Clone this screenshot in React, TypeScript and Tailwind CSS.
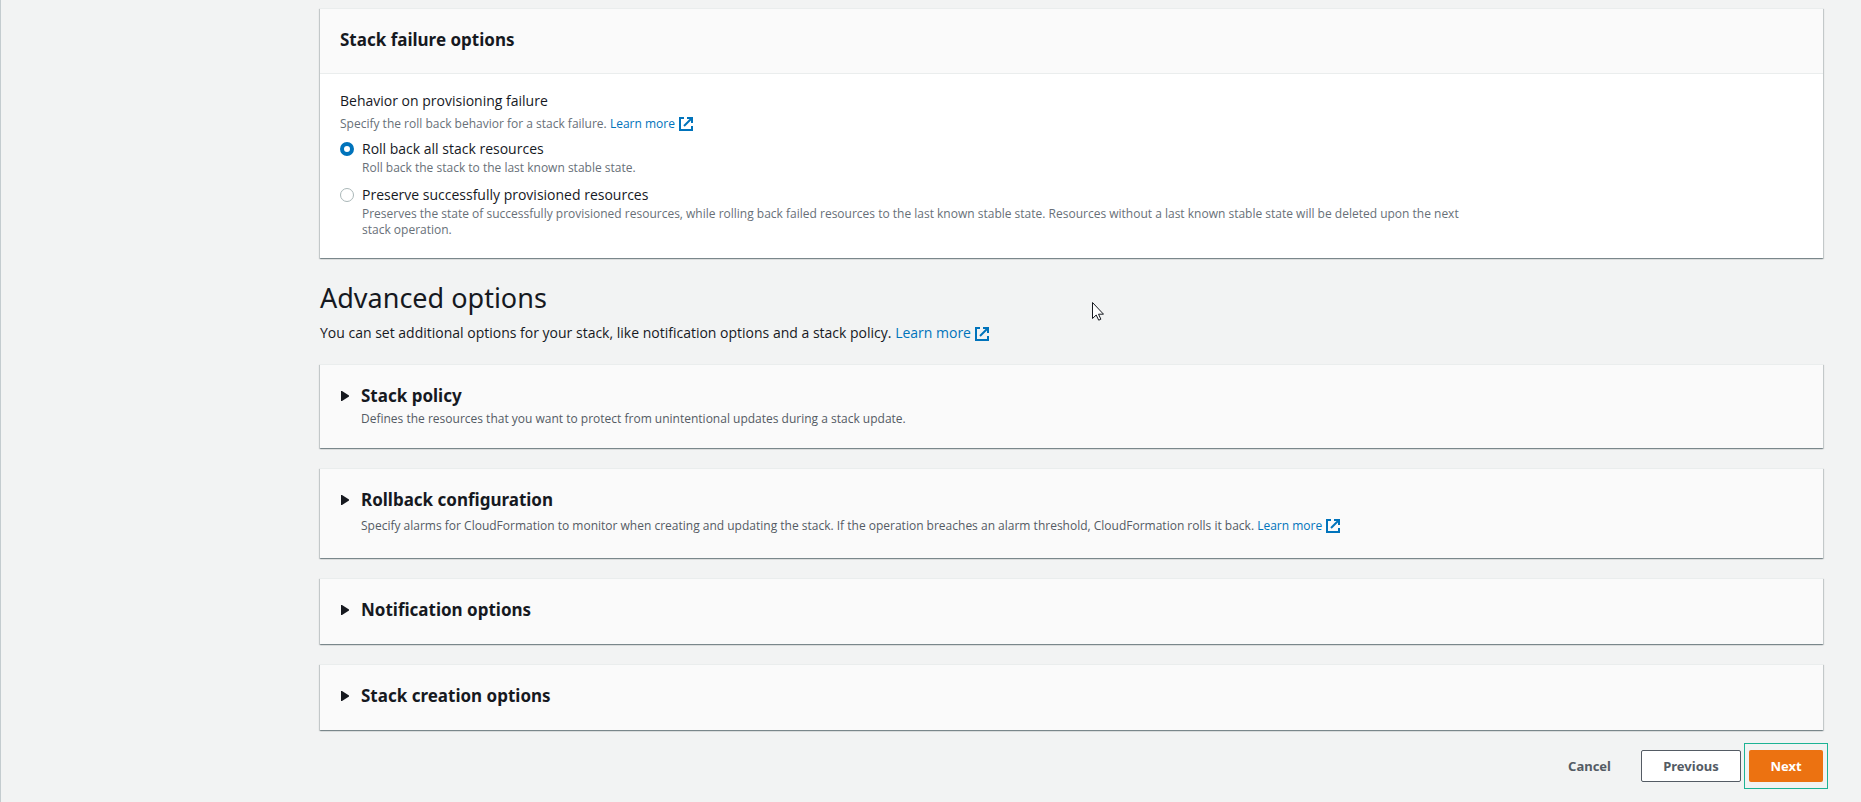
import { useState, type ReactNode } from "react";

const CARD =
  "border-t border-[#eaeded] shadow-[0_1px_1px_0_rgba(0,28,36,0.3),1px_1px_1px_0_rgba(0,28,36,0.15),-1px_1px_1px_0_rgba(0,28,36,0.15)]";

function ExternalIcon() {
  return (
    <svg viewBox="0 0 14 14" className="ml-1 inline-block size-3.5 align-[-3px]" fill="none" stroke="#0073bb" strokeWidth="2" aria-hidden="true">
      <path d="M5 1H1v12h12V9" />
      <path d="M8 1h5v5" />
      <path d="M12.5 1.5 5 9" />
    </svg>
  );
}

function LearnMore() {
  return (
    <a href="#learn-more" className="whitespace-nowrap text-[#0073bb] hover:underline">
      Learn more
      <ExternalIcon />
    </a>
  );
}

type OptionProps = {
  id: string;
  label: string;
  description: string;
  checked: boolean;
  onSelect: () => void;
};

function RadioOption({ id, label, description, checked, onSelect }: OptionProps) {
  return (
    <div className="flex gap-2">
      <input
        id={id}
        type="radio"
        name="failure-behavior"
        checked={checked}
        onChange={onSelect}
        aria-describedby={`${id}-description`}
        className="mt-1 size-3.5 shrink-0 appearance-none rounded-full border border-[#aab7b8] bg-white checked:border-4 checked:border-[#0073bb]"
      />
      <div>
        <label htmlFor={id} className="block text-sm leading-[22px]">
          {label}
        </label>
        <p id={`${id}-description`} className="max-w-[1110px] text-xs leading-4 text-[#687078]">
          {description}
        </p>
      </div>
    </div>
  );
}

function ExpandableCard({ title, children }: { title: string; children?: ReactNode }) {
  return (
    <section className={`${CARD} min-h-[66px] bg-[#fafafa] px-5 pt-[18px] pb-[21px]`}>
      <h2 className="font-['Noto_Sans',sans-serif] text-[17px] leading-[25px] font-bold">
        <button type="button" aria-expanded="false" className="flex items-center">
          <svg viewBox="0 0 10 10" className="mr-[11px] size-2.5" fill="#16191f" aria-hidden="true">
            <path d="M1 0h1l7 4.5v1L2 10H1z" />
          </svg>
          {title}
        </button>
      </h2>
      {children}
    </section>
  );
}

export default function App() {
  const [behavior, setBehavior] = useState("rollback");

  return (
    <main className="min-h-screen border-l border-[#c4cccf] bg-[#f2f3f3] pt-2 pr-[38px] pb-5 pl-[319px] font-['Open_Sans','Noto_Sans',sans-serif] text-[#16191f]">
      <section className={`${CARD} bg-white`}>
        <header className="border-b border-[#eaeded] bg-[#fafafa] px-5 pt-[18px] pb-[21px]">
          <h2 className="font-['Noto_Sans',sans-serif] text-[17px] leading-[25px] font-bold">Stack failure options</h2>
        </header>
        <fieldset className="px-5 pt-4 pb-5">
          <legend className="float-left w-full text-sm leading-[22px]">Behavior on provisioning failure</legend>
          <p className="clear-both text-xs leading-6 text-[#687078]">
            Specify the roll back behavior for a stack failure. <LearnMore />
          </p>
          <div className="mt-0.5 flex flex-col gap-2">
            <RadioOption
              id="rollback"
              label="Roll back all stack resources"
              description="Roll back the stack to the last known stable state."
              checked={behavior === "rollback"}
              onSelect={() => setBehavior("rollback")}
            />
            <RadioOption
              id="preserve"
              label="Preserve successfully provisioned resources"
              description="Preserves the state of successfully provisioned resources, while rolling back failed resources to the last known stable state. Resources without a last known stable state will be deleted upon the next stack operation."
              checked={behavior === "preserve"}
              onSelect={() => setBehavior("preserve")}
            />
          </div>
        </fieldset>
      </section>

      <h1 className="mt-5 mb-1 font-['Noto_Sans',sans-serif] text-[27px] leading-10">Advanced options</h1>
      <p className="text-sm leading-[22px]">
        You can set additional options for your stack, like notification options and a stack policy. <LearnMore />
      </p>

      <div className="mt-5 flex flex-col gap-5">
        <ExpandableCard title="Stack policy">
          <p className="mt-[3px] pl-[21px] text-xs leading-4 text-[#545b64]">
            Defines the resources that you want to protect from unintentional updates during a stack update.
          </p>
        </ExpandableCard>
        <ExpandableCard title="Rollback configuration">
          <p className="mt-[3px] pl-[21px] text-xs leading-[22px] text-[#545b64]">
            Specify alarms for CloudFormation to monitor when creating and updating the stack. If the operation breaches an alarm threshold, CloudFormation rolls it back. <LearnMore />
          </p>
        </ExpandableCard>
        <ExpandableCard title="Notification options" />
        <ExpandableCard title="Stack creation options" />
      </div>

      <div className="mt-5 flex items-center justify-end gap-2 font-['Noto_Sans',sans-serif] text-[13px] leading-[22px] font-bold text-[#545b64]">
        <button type="button" className="h-8 px-[22px]">Cancel</button>
        <button type="button" className="h-8 w-[100px] rounded-xs border border-[#545b64] bg-white">Previous</button>
        <div className="relative">
          <button type="button" className="block h-8 w-[74px] rounded-xs bg-[#ec7211] text-white">Next</button>
          <span className="pointer-events-none absolute -inset-x-[5px] -inset-y-[7px] border border-[#1db394]" />
        </div>
      </div>

      <svg viewBox="0 0 12 19" className="pointer-events-none absolute top-[302px] left-[1092px] h-[19px] w-3" fill="#fff" stroke="#16191f" strokeWidth="1" aria-hidden="true">
        <path d="M.5.5v16l3.7-3.5 2.5 5.2 2.2-1-2.4-5h5z" />
      </svg>
    </main>
  );
}
